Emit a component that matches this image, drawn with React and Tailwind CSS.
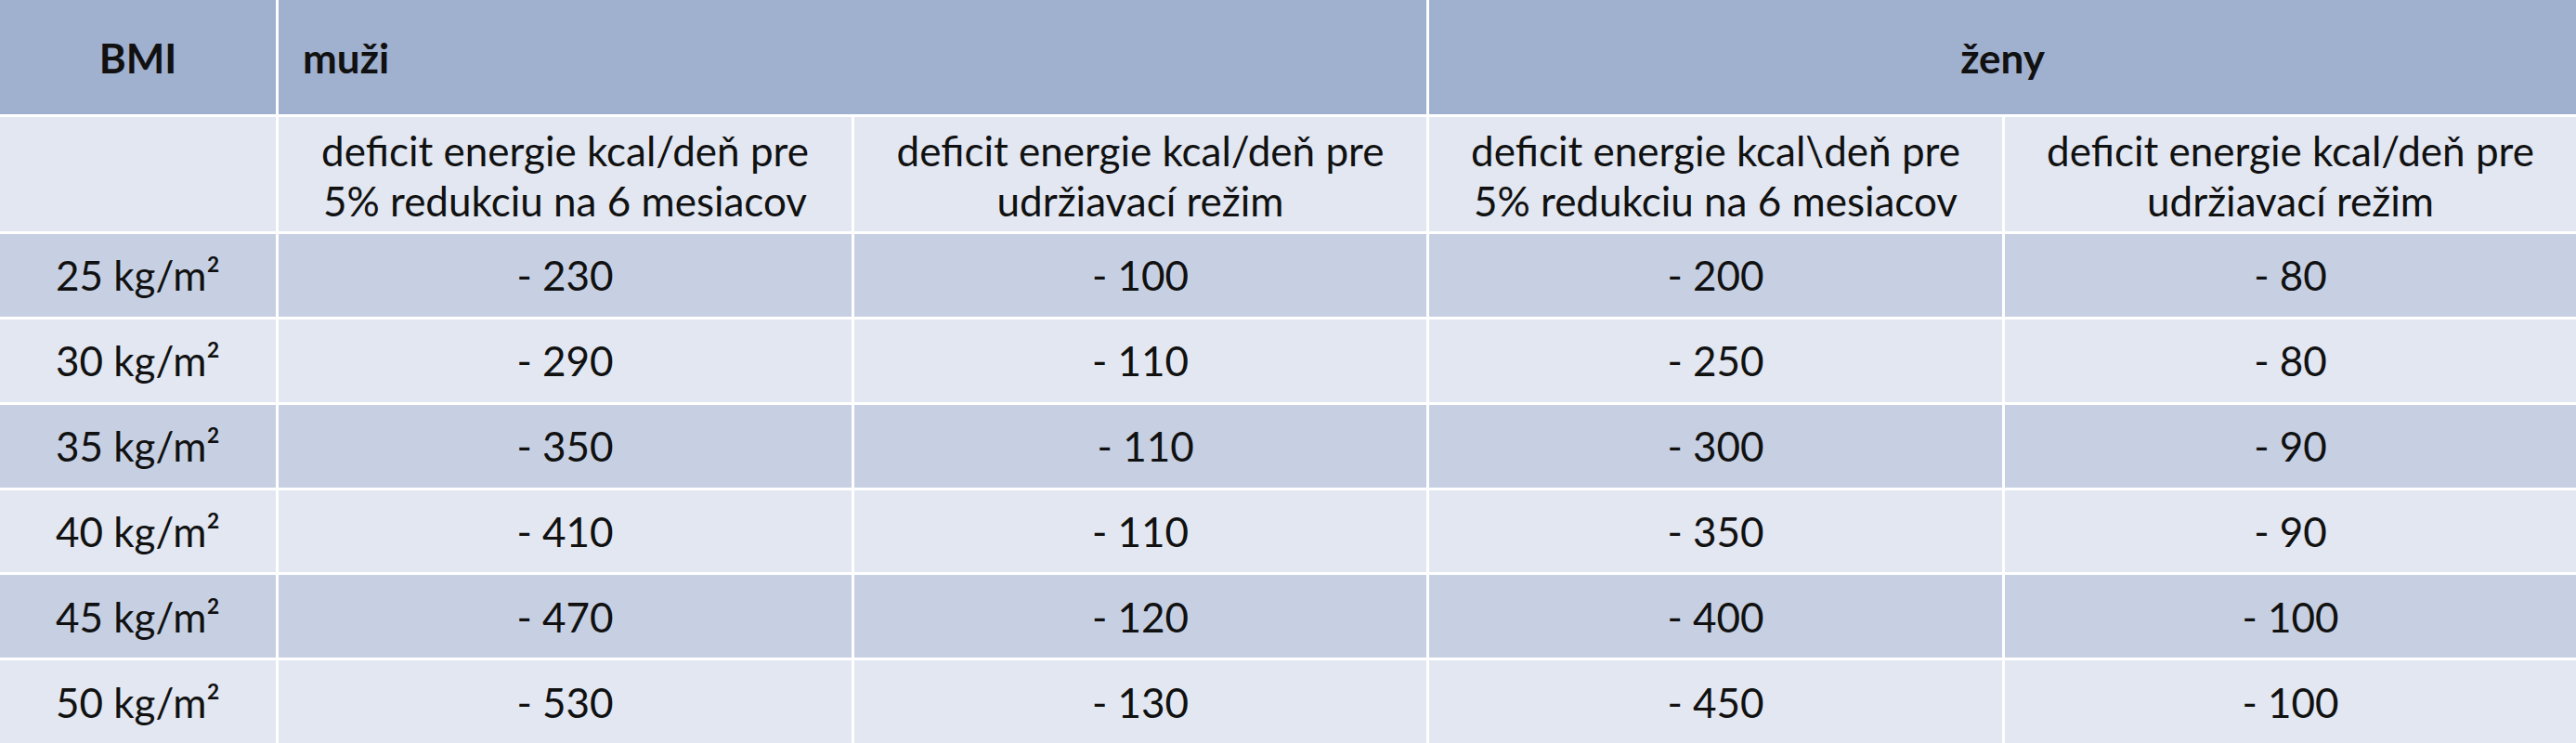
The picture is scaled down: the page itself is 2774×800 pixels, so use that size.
import React from "react";

const rows = [
  ["25", "- 230", "- 100", "- 200", "- 80"],
  ["30", "- 290", "- 110", "- 250", "- 80"],
  ["35", "- 350", "\u00a0- 110", "- 300", "- 90"],
  ["40", "- 410", "- 110", "- 350", "- 90"],
  ["45", "- 470", "- 120", "- 400", "- 100"],
  ["50", "- 530", "- 130", "- 450", "- 100"],
];

function Sub({ a, b }) {
  return (
    <div className="bg-[#e2e7f1] flex flex-col items-center justify-center text-center leading-[54px] pt-[2px]">
      <span>{a}</span>
      <span>{b}</span>
    </div>
  );
}

export default function App() {
  return (
    <div
      className="w-[2774px] h-[800px] bg-white grid grid-cols-[297px_617px_616px_617px_minmax(0,1fr)] grid-rows-[123px_123px_repeat(6,minmax(0,1fr))] gap-[3px] text-[44px] text-[#111] overflow-hidden"
      style={{ fontFamily: "Lato, 'Open Sans', sans-serif" }}
    >
      <div className="bg-[#a0b0cf] flex items-center justify-center font-bold">BMI</div>
      <div className="bg-[#a0b0cf] col-span-2 flex items-center pl-[26px] font-bold">muži</div>
      <div className="bg-[#a0b0cf] col-span-2 flex items-center justify-center font-bold">ženy</div>

      <div className="bg-[#e2e7f1]"></div>
      <Sub a="deficit energie kcal/deň pre" b="5% redukciu na 6 mesiacov" />
      <Sub a="deficit energie kcal/deň pre" b="udržiavací režim" />
      <Sub a="deficit energie kcal\deň pre" b="5% redukciu na 6 mesiacov" />
      <Sub a="deficit energie kcal/deň pre" b="udržiavací režim" />

      {rows.map((r, i) => {
        const bg = i % 2 === 0 ? "bg-[#c7d0e3]" : "bg-[#e2e7f1]";
        return (
          <React.Fragment key={r[0]}>
            <div className={`${bg} flex items-center justify-center`}>
              {r[0]} kg/m²
            </div>
            {r.slice(1).map((v, j) => (
              <div key={j} className={`${bg} flex items-center justify-center whitespace-pre`}>
                {v}
              </div>
            ))}
          </React.Fragment>
        );
      })}
    </div>
  );
}
